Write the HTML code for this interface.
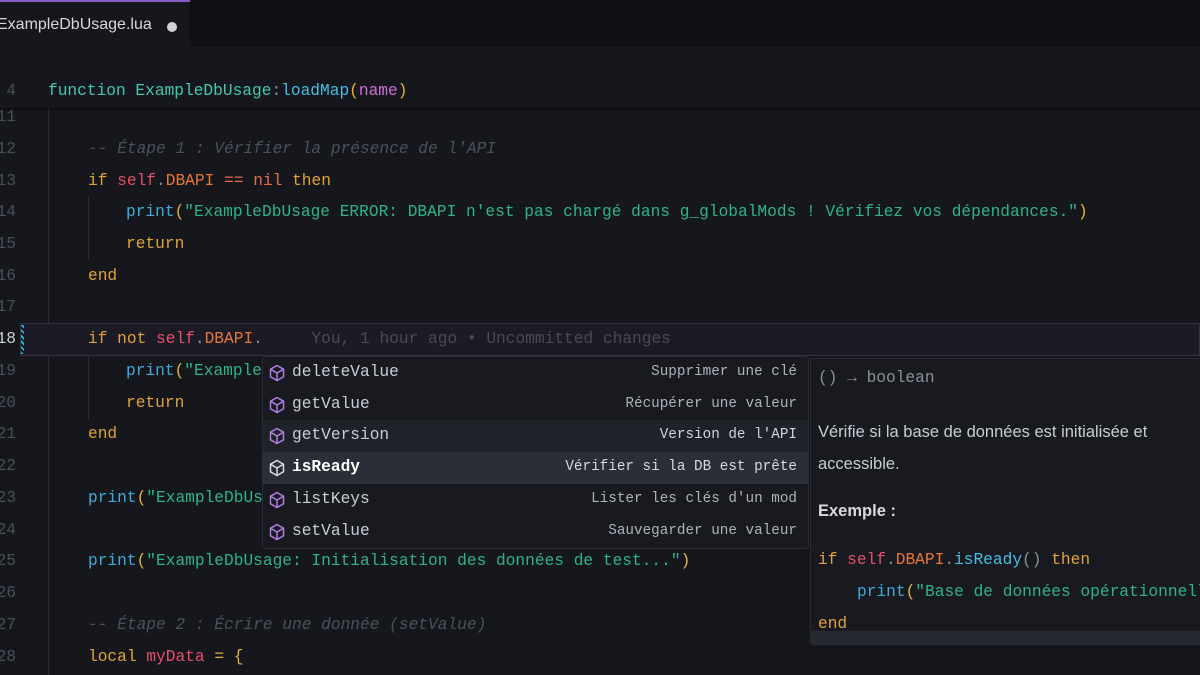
<!DOCTYPE html>
<html><head><meta charset="utf-8"><style>
*{margin:0;padding:0;box-sizing:border-box}
body{width:1200px;height:675px;overflow:hidden;background:#15171c;font-family:"Liberation Mono",monospace;font-size:16.2px;color:#c8ccd4;position:relative}
.tabbar{position:absolute;left:0;top:0;width:1200px;height:47px;background:#0f1013}
.tab{position:absolute;left:0;top:0;width:190px;height:47px;background:#15171c;border-top:2px solid #8a5cc4;font-family:"Liberation Sans",sans-serif;font-size:16px;color:#d6d8dd;padding:14px 0 0 0}
.tab span{position:relative;left:-3px}
.dot{position:absolute;left:167px;top:20px;width:10px;height:10px;border-radius:50%;background:#d0d2d6}
.ln{position:absolute;left:0;width:16px;text-align:right;color:#4a4e57;overflow:visible;white-space:nowrap;direction:rtl;line-height:24px;height:24px}
.l{position:absolute;white-space:pre;height:24px;line-height:24px}
.k{color:#e0a23a}.s{color:#e2506c}.d{color:#e8763c}.p{color:#40a9d8}.st{color:#2eb38a}.c{color:#4b505a;font-style:italic}.t{color:#47c6b0}.f{color:#45bfe6}.y{color:#e4b33c}.m{color:#d26ed8}.n{color:#e86a4a}.g{color:#8a8f98}
.guide{position:absolute;width:1px;background:#2a2d33}
.sticky{position:absolute;left:0;top:70px;width:1200px;height:38px;background:#15171c;box-shadow:0 2px 3px rgba(0,0,0,.35)}
.cur{position:absolute;left:20px;top:323px;width:1180px;height:33px;background:#1c1a24;border:1px solid #3a2f4a}
.sug{position:absolute;left:262px;top:356px;width:547px;height:193px;background:#181a1f;border:1px solid #2a2c33;border-radius:4px;overflow:hidden}
.row{position:absolute;left:0;width:545px;height:31.7px;line-height:31.7px}
.row .ic{position:absolute;left:5px;top:7px;width:18px;height:18px}
.row .nm{position:absolute;left:29px;color:#c8ccd4}
.row .ds{position:absolute;right:11px;font-size:14.3px;color:#aeb2ba}
.doc{position:absolute;left:810px;top:358px;width:395px;height:287px;background:#181a1f;border:1px solid #2a2c33;border-radius:4px;overflow:hidden}
.sans{font-family:"Liberation Sans",sans-serif}
</style></head><body>
<div class="tabbar"><div class="tab"><span>ExampleDbUsage.lua</span><div class="dot"></div></div></div>

<div class="guide" style="left:48px;top:108px;height:567px"></div>
<div class="guide" style="left:88px;top:196px;height:64px"></div>
<div class="guide" style="left:88px;top:355px;height:64px"></div>

<div class="cur"></div>
<div style="position:absolute;left:21px;top:325px;width:3px;height:29px;background:repeating-linear-gradient(45deg,#2ab3c8 0 2px,#15171c 2px 4px)"></div>

<div class="sticky"></div>
<div class="ln" style="top:79px">4</div>
<div class="l" style="left:48px;top:79px"><span class="t">function ExampleDbUsage</span><span class="g">:</span><span class="f">loadMap</span><span class="y">(</span><span class="m">name</span><span class="y">)</span></div>

<div class="ln" style="top:105px">11</div>
<div class="ln" style="top:137px">12</div>
<div class="l" style="left:88px;top:137px"><span class="c">-- Étape 1 : Vérifier la présence de l'API</span></div>
<div class="ln" style="top:169px">13</div>
<div class="l" style="left:88px;top:169px"><span class="k">if</span> <span class="s">self</span><span class="g">.</span><span class="d">DBAPI</span> <span class="n">==</span> <span class="n">nil</span> <span class="k">then</span></div>
<div class="ln" style="top:200px">14</div>
<div class="l" style="left:126px;top:200px"><span class="p">print</span><span class="y">(</span><span class="st">"ExampleDbUsage ERROR: DBAPI n'est pas chargé dans g_globalMods ! Vérifiez vos dépendances."</span><span class="y">)</span></div>
<div class="ln" style="top:232px">15</div>
<div class="l" style="left:126px;top:232px"><span class="k">return</span></div>
<div class="ln" style="top:264px">16</div>
<div class="l" style="left:88px;top:264px"><span class="k">end</span></div>
<div class="ln" style="top:295px">17</div>
<div class="ln" style="top:327px;color:#cfd2d8">18</div>
<div class="l" style="left:88px;top:327px"><span class="k">if not</span> <span class="s">self</span><span class="g">.</span><span class="d">DBAPI</span><span class="g">.</span>     <span style="color:#474b55">You, 1 hour ago • Uncommitted changes</span></div>
<div class="ln" style="top:359px">19</div>
<div class="l" style="left:126px;top:359px"><span class="p">print</span><span class="y">(</span><span class="st">"Example</span></div>
<div class="ln" style="top:391px">20</div>
<div class="l" style="left:126px;top:391px"><span class="k">return</span></div>
<div class="ln" style="top:422px">21</div>
<div class="l" style="left:88px;top:422px"><span class="k">end</span></div>
<div class="ln" style="top:454px">22</div>
<div class="ln" style="top:486px">23</div>
<div class="l" style="left:88px;top:486px"><span class="p">print</span><span class="y">(</span><span class="st">"ExampleDbUs</span></div>
<div class="ln" style="top:518px">24</div>
<div class="ln" style="top:549px">25</div>
<div class="l" style="left:88px;top:549px"><span class="p">print</span><span class="y">(</span><span class="st">"ExampleDbUsage: Initialisation des données de test..."</span><span class="y">)</span></div>
<div class="ln" style="top:581px">26</div>
<div class="ln" style="top:613px">27</div>
<div class="l" style="left:88px;top:613px"><span class="c">-- Étape 2 : Écrire une donnée (setValue)</span></div>
<div class="ln" style="top:645px">28</div>
<div class="l" style="left:88px;top:645px"><span class="k">local</span> <span class="s">myData</span> <span class="y">=</span> <span class="y">{</span></div>

<div class="sug">
<div class="row" style="top:0"><svg class="ic" viewBox="0 0 18 18"><path d="M9 1.5L15.5 5.2V12.8L9 16.5L2.5 12.8V5.2Z M2.5 5.2L9 9L15.5 5.2 M9 9V16.5" fill="none" stroke="#b07ee0" stroke-width="1.5"/></svg><span class="nm">deleteValue</span><span class="ds">Supprimer une clé</span></div>
<div class="row" style="top:31.7px"><svg class="ic" viewBox="0 0 18 18"><path d="M9 1.5L15.5 5.2V12.8L9 16.5L2.5 12.8V5.2Z M2.5 5.2L9 9L15.5 5.2 M9 9V16.5" fill="none" stroke="#b07ee0" stroke-width="1.5"/></svg><span class="nm">getValue</span><span class="ds">Récupérer une valeur</span></div>
<div class="row" style="top:63.4px;background:#1f2228"><svg class="ic" viewBox="0 0 18 18"><path d="M9 1.5L15.5 5.2V12.8L9 16.5L2.5 12.8V5.2Z M2.5 5.2L9 9L15.5 5.2 M9 9V16.5" fill="none" stroke="#b07ee0" stroke-width="1.5"/></svg><span class="nm">getVersion</span><span class="ds" style="color:#d0d3d9">Version de l'API</span></div>
<div class="row" style="top:95.1px;background:#2a2e36"><svg class="ic" viewBox="0 0 18 18"><path d="M9 1.5L15.5 5.2V12.8L9 16.5L2.5 12.8V5.2Z M2.5 5.2L9 9L15.5 5.2 M9 9V16.5" fill="none" stroke="#d8dae0" stroke-width="1.5"/></svg><span class="nm" style="color:#fff;font-weight:bold">isReady</span><span class="ds" style="color:#d8dae0">Vérifier si la DB est prête</span></div>
<div class="row" style="top:126.8px"><svg class="ic" viewBox="0 0 18 18"><path d="M9 1.5L15.5 5.2V12.8L9 16.5L2.5 12.8V5.2Z M2.5 5.2L9 9L15.5 5.2 M9 9V16.5" fill="none" stroke="#b07ee0" stroke-width="1.5"/></svg><span class="nm">listKeys</span><span class="ds">Lister les clés d'un mod</span></div>
<div class="row" style="top:158.5px"><svg class="ic" viewBox="0 0 18 18"><path d="M9 1.5L15.5 5.2V12.8L9 16.5L2.5 12.8V5.2Z M2.5 5.2L9 9L15.5 5.2 M9 9V16.5" fill="none" stroke="#b07ee0" stroke-width="1.5"/></svg><span class="nm">setValue</span><span class="ds">Sauvegarder une valeur</span></div>
</div>

<div class="doc">
<div class="l" style="left:7px;top:7px;color:#8a8f98">() → boolean</div>
<div class="sans" style="position:absolute;left:7px;top:57px;width:385px;font-size:16.5px;line-height:32px;color:#c8ccd4">Vérifie si la base de données est initialisée et accessible.</div>
<div class="sans" style="position:absolute;left:7px;top:143px;font-size:16.5px;font-weight:bold;color:#d8dae0">Exemple :</div>
<div class="l" style="left:7px;top:189px"><span class="k">if</span> <span class="s">self</span><span class="g">.</span><span class="d">DBAPI</span><span class="g">.</span><span class="f">isReady</span><span class="g">()</span> <span class="k">then</span></div>
<div class="l" style="left:46px;top:221px"><span class="p">print</span><span class="y">(</span><span class="st">"Base de données opérationnelle"</span></div>
<div class="l" style="left:7px;top:253px"><span class="k">end</span></div>
<div style="position:absolute;left:0;top:272px;width:395px;height:14px;background:#262930"></div>
</div>
</body></html>
